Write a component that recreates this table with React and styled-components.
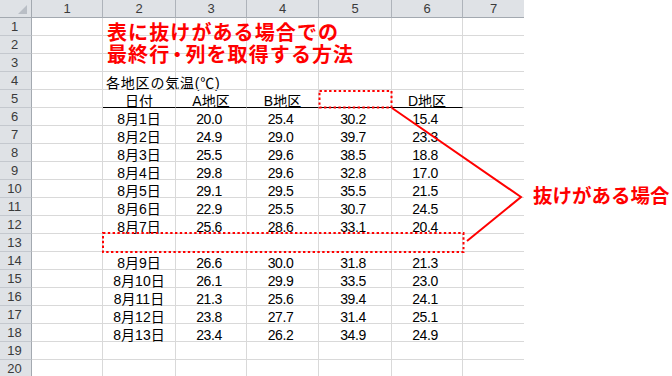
import React from 'react'
import styled, { createGlobalStyle } from 'styled-components'

const GlobalStyle = createGlobalStyle`
  html, body {
    margin: 0;
    padding: 0;
    background: #fff;
    overflow: hidden;
  }
  body {
    width: 672px;
    height: 376px;
    font-family: "Liberation Sans", "Noto Sans CJK JP", sans-serif;
  }
`

const COLS = [71, 73, 71, 72, 73, 71, 61]
const ROW_COUNT = 20

// 表のデータ（13行目は抜け）
const rows = {
  5: ['日付', 'A地区', 'B地区', '', 'D地区'],
  6: ['8月1日', '20.0', '25.4', '30.2', '15.4'],
  7: ['8月2日', '24.9', '29.0', '39.7', '23.3'],
  8: ['8月3日', '25.5', '29.6', '38.5', '18.8'],
  9: ['8月4日', '29.8', '29.6', '32.8', '17.0'],
  10: ['8月5日', '29.1', '29.5', '35.5', '21.5'],
  11: ['8月6日', '22.9', '25.5', '30.7', '24.5'],
  12: ['8月7日', '25.6', '28.6', '33.1', '20.4'],
  14: ['8月9日', '26.6', '30.0', '31.8', '21.3'],
  15: ['8月10日', '26.1', '29.9', '33.5', '23.0'],
  16: ['8月11日', '21.3', '25.6', '39.4', '24.1'],
  17: ['8月12日', '23.8', '27.7', '31.4', '25.1'],
  18: ['8月13日', '23.4', '26.2', '34.9', '24.9']
}

const Page = styled.div`
  position: relative;
  display: flex;
  width: 672px;
  height: 376px;
  overflow: hidden;
`

const Sheet = styled.div`
  position: relative;
  flex: none;
  display: grid;
  grid-template-columns: 32px ${COLS.map(w => w + 'px').join(' ')};
  grid-auto-rows: 18px;
  width: 524px;
  align-content: start;
`

const Corner = styled.div`
  position: relative;
  background: #dfe2e6;
  border-right: 1px solid #a3a9b0;
  border-bottom: 1px solid #a3a9b0;

  &::after {
    content: '';
    position: absolute;
    right: 4px;
    bottom: 3px;
    width: 0;
    height: 0;
    border-left: 9px solid transparent;
    border-bottom: 9px solid #b9bec5;
  }
`

const ColHead = styled.div`
  display: flex;
  align-items: center;
  justify-content: center;
  background: #dfe2e6;
  border-right: ${p => (p.$last ? 'none' : '1px solid #aeb3ba')};
  border-bottom: 1px solid #a3a9b0;
  font-size: 13px;
  color: #3a3a3a;
`

const RowHead = styled.div`
  display: flex;
  align-items: center;
  justify-content: center;
  padding-right: 2px;
  background: #dfe2e6;
  border-right: 1px solid #a3a9b0;
  border-bottom: 1px solid #c4c8ce;
  font-size: 13px;
  color: #3a3a3a;
`

const Cell = styled.div`
  display: flex;
  align-items: flex-end;
  justify-content: ${p => (p.$align === 'left' ? 'flex-start' : 'center')};
  padding: ${p => (p.$num ? '0 4px 0 0' : p.$align === 'left' ? '0 0 0 3px' : '0')};
  border-right: ${p => (p.$last ? 'none' : '1px solid #d9d9d9')};
  border-bottom: 1px solid ${p => (p.$underline ? '#000' : '#d9d9d9')};
  font-size: 14px;
  line-height: 12px;
  letter-spacing: ${p => (p.$num ? '-0.4px' : p.$align === 'left' ? '0.8px' : '0')};
  color: #000;
  white-space: nowrap;
  min-width: 0;
`

const Title = styled.div`
  position: absolute;
  left: 107px;
  top: 21px;
  font-family: "Noto Sans CJK JP", sans-serif;
  font-weight: 700;
  font-size: 20px;
  line-height: 22px;
  letter-spacing: 1.1px;
  color: #ff0000;
  white-space: nowrap;
`

const Dot = styled.span`
  margin: 0 -3px;
`

const Aside = styled.div`
  flex: 1;
  padding: 184px 0 0 9px;
`

const Callout = styled.div`
  font-family: "Noto Sans CJK JP", sans-serif;
  font-weight: 700;
  font-size: 19.5px;
  line-height: 22px;
  color: #ff0000;
  white-space: nowrap;
`

const Marks = styled.svg`
  position: absolute;
  left: 0;
  top: 0;
  pointer-events: none;
`

function cellText (r, c) {
  if (r === 4 && c === 2) return '各地区の気温(℃)'
  const data = rows[r]
  if (!data || c < 2 || c > 6) return ''
  return data[c - 2]
}

function SheetRow ({ r }) {
  return (
    <>
      <RowHead>{r}</RowHead>
      {COLS.map((_, i) => {
        const c = i + 1
        const text = cellText(r, c)
        const isData = r >= 6 && c >= 3 && c <= 6
        return (
          <Cell
            key={c}
            $last={c === COLS.length}
            $underline={r === 5 && c >= 2 && c <= 6}
            $align={r === 4 ? 'left' : 'center'}
            $num={isData}
          >
            {text}
          </Cell>
        )
      })}
    </>
  )
}

export default function App () {
  const rowNums = Array.from({ length: ROW_COUNT }, (_, i) => i + 1)
  return (
    <>
      <GlobalStyle />
      <Page>
        <Sheet>
          <Corner />
          {COLS.map((_, i) => (
            <ColHead key={i} $last={i === COLS.length - 1}>{i + 1}</ColHead>
          ))}
          {rowNums.map(r => <SheetRow key={r} r={r} />)}
          <Title>
            表に抜けがある場合での<br />
            最終行<Dot>・</Dot>列を取得する方法
          </Title>
        </Sheet>
        <Aside>
          <Callout>抜けがある場合</Callout>
        </Aside>
        <Marks width='672' height='376' viewBox='0 0 672 376'>
          <g fill='none' stroke='#ff0000' strokeWidth='2'>
            <rect x='319.5' y='91' width='72' height='16.5' strokeDasharray='2.4 2.4' />
            <rect x='103' y='233' width='360.5' height='19' strokeDasharray='2.4 2.4' />
            <polyline points='392,108 521,197 467,241' strokeLinejoin='miter' />
          </g>
        </Marks>
      </Page>
    </>
  )
}
